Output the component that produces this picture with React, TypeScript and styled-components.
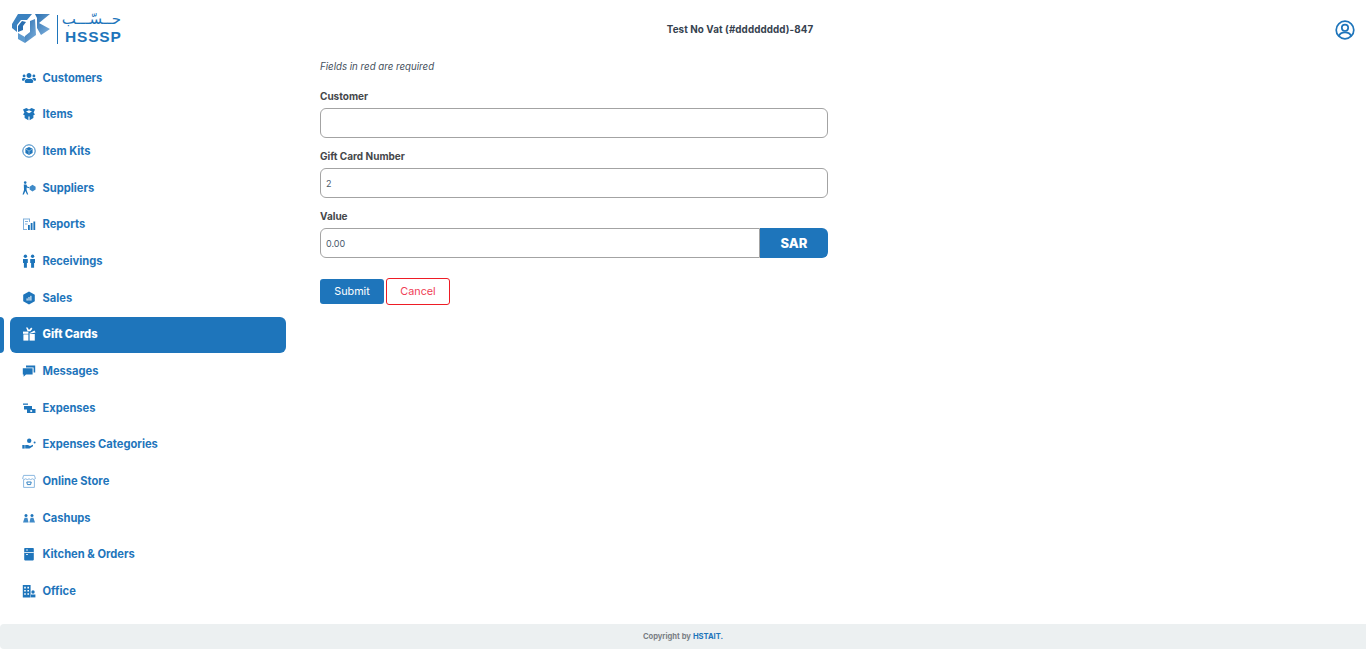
import styled, { createGlobalStyle } from "styled-components";
import type { ReactNode } from "react";
import { FaUsers } from "react-icons/fa";

const blue = "#1e75bb";

const GlobalStyle = createGlobalStyle`
  html, body {
    margin: 0;
    padding: 0;
    background: #fff;
    font-family: Inter, "Liberation Sans", sans-serif;
  }
  * { box-sizing: border-box; }
`;

const Page = styled.div`
  width: 1366px;
  height: 650px;
  display: grid;
  grid-template-columns: 296px 1fr;
  grid-template-rows: 624px 25px;
  overflow: hidden;
`;

const Sidebar = styled.aside`
  display: flex;
  flex-direction: column;
`;

const LogoRow = styled.div`
  height: 60.3px;
  padding: 13px 0 0 12px;
  display: flex;
  align-items: flex-start;
`;

const LogoDivider = styled.div`
  width: 1px;
  height: 29px;
  margin: 2px 7px 0 7px;
  background: ${blue};
`;

const LogoWords = styled.div`
  display: flex;
  flex-direction: column;
  width: 56px;
  margin-top: -2px;
`;

const LogoArabic = styled.div`
  font-family: "DejaVu Sans", sans-serif;
  font-size: 15px;
  line-height: 17px;
  height: 17px;
  color: ${blue};
  text-align: center;
  direction: rtl;
  white-space: nowrap;
`;

const LogoLatin = styled.div`
  font-family: "Liberation Sans", sans-serif;
  font-weight: 700;
  font-size: 15.5px;
  line-height: 18px;
  letter-spacing: 0.8px;
  color: ${blue};
`;

const Nav = styled.nav`
  display: flex;
  flex-direction: column;
`;

const NavRow = styled.div<{ $active?: boolean }>`
  position: relative;
  height: 36px;
  margin: 0 10px 0.67px 10px;
  padding: 0 0 1px 12px;
  display: flex;
  align-items: center;
  gap: 6.5px;
  border-radius: 6px;
  background: ${(p) => (p.$active ? blue : "transparent")};
  color: ${(p) => (p.$active ? "#fff" : blue)};
  font-size: 11.15px;
  font-weight: ${(p) => (p.$active ? 800 : 700)};

  ${(p) =>
    p.$active &&
    `&::before {
      content: "";
      position: absolute;
      left: -10px;
      top: 0;
      width: 4px;
      height: 36px;
      background: ${blue};
      border-radius: 0 4px 4px 0;
    }`}
`;

const NavIcon = styled.span`
  width: 14px;
  height: 14px;
  display: flex;
  align-items: center;
  justify-content: center;
  flex: none;
  svg {
    width: 14px;
    height: 14px;
    display: block;
  }
`;

const Main = styled.main`
  display: flex;
  flex-direction: column;
  min-width: 0;
`;

const TopBar = styled.header`
  position: relative;
  height: 59px;
  display: flex;
  align-items: center;
  justify-content: center;
  padding-right: 182px;
`;

const AccountTitle = styled.div`
  font-size: 9.8px;
  font-weight: 700;
  color: #36424f;
  letter-spacing: 0.1px;
`;

const ProfileIcon = styled.svg`
  position: absolute;
  right: 11px;
  top: 20px;
  width: 20px;
  height: 20px;
`;

const FormArea = styled.form`
  width: 508px;
  margin-left: 24px;
  display: flex;
  flex-direction: column;
`;

const RequiredNote = styled.div`
  font-size: 9.7px;
  font-style: italic;
  color: #44505c;
  line-height: 14px;
  margin: 1px 0 15px;
`;

const FieldLabel = styled.label`
  display: block;
  font-size: 10px;
  font-weight: 700;
  color: #45474a;
  line-height: 14px;
  margin-bottom: 5px;
`;

const Field = styled.div`
  margin-bottom: 11px;
`;

const TextInput = styled.input<{ $joined?: boolean }>`
  width: 100%;
  height: 30px;
  padding: 0 5px;
  flex: 1;
  border: 1px solid #a3a3a3;
  border-radius: ${(p) => (p.$joined ? "6px 0 0 6px" : "6px")};
  background: #fff;
  color: #4a5a6c;
  font-family: inherit;
  font-size: 9px;
  outline: none;
`;

const InputGroup = styled.div`
  display: flex;
`;

const CurrencyAddon = styled.div`
  width: 68px;
  height: 30px;
  display: flex;
  align-items: center;
  justify-content: center;
  background: ${blue};
  color: #fff;
  border-radius: 0 6px 6px 0;
  font-size: 13px;
  font-weight: 800;
  padding-bottom: 1px;
`;

const ButtonRow = styled.div`
  display: flex;
  align-items: center;
  gap: 2px;
  margin-top: 9px;
`;

const SubmitButton = styled.button`
  width: 64px;
  height: 25px;
  border: none;
  border-radius: 3px;
  background: ${blue};
  color: #fff;
  font-family: inherit;
  font-size: 10.8px;
  font-weight: 400;
  padding-bottom: 2px;
`;

const CancelButton = styled.button`
  width: 64px;
  height: 27px;
  border: 1px solid #ee1c25;
  border-radius: 3px;
  background: #fff;
  color: #ef4056;
  font-family: inherit;
  font-size: 10.8px;
  padding-bottom: 2px;
`;

const Footer = styled.footer`
  grid-column: 1 / -1;
  display: flex;
  align-items: center;
  justify-content: center;
  background: #ecf0f1;
  border-radius: 4px 0 0 4px;
  font-size: 7.6px;
  font-weight: 700;
  color: #7a7f85;
`;

const FooterBrand = styled.span`
  color: ${blue};
  margin-left: 2px;
`;

function LogoMark() {
  return (
    <svg width="38" height="30" viewBox="0 0 38 30">
      <defs>
        <linearGradient id="logoFill" x1="0" y1="0" x2="1" y2="1">
          <stop offset="0" stopColor="#2a6fb0" />
          <stop offset="1" stopColor="#7fb0dc" />
        </linearGradient>
      </defs>
      <path d="M0 11 L6 1 L20 1 L15 7 L9 7 L5 12 L5 19 L0 15 Z" fill="#3b82c0" />
      <path d="M6 19 L6 13 L10 8 L14 9 L11 13 L11 17 Z" fill="#2a6fb0" />
      <path d="M13 23 L18 19 L18 8 L23 6 L24 22 L13 30 Z" fill="url(#logoFill)" />
      <path d="M6 20 L13 24 L13 30 L6 26 Z" fill="#5d9bd0" />
      <path d="M23 1 L38 1 L27 10 L38 16 L29 22 L25 15 L25 5 Z" fill="url(#logoFill)" />
    </svg>
  );
}

function ItemsIcon() {
  return (
    <svg viewBox="0 0 14 14" fill={blue}>
      <path d="M1 2.6 L4.4 .9 L7 2.4 L9.6 .9 L13 2.6 L11.6 5.4 L13 7.4 L11.4 8.2 L11.4 11 L7.6 13.3 L7.6 9.4 L6.4 9.4 L6.4 13.3 L2.6 11 L2.6 8.2 L1 7.4 L2.4 5.4 Z M4 4.6 L7 6.2 L10 4.6 L7 3.2 Z" fillRule="evenodd" />
    </svg>
  );
}

function ItemKitsIcon() {
  return (
    <svg viewBox="0 0 14 14">
      <circle cx="7" cy="7" r="6.2" fill="none" stroke={blue} strokeWidth="0.9" />
      <path d="M7 3 L10.6 4.8 L10.6 9 L7 11 L3.4 9 L3.4 4.8 Z" fill={blue} />
      <path d="M7 7 V10.4 M4 5.2 L7 7 L10 5.2" stroke="#dcebf7" strokeWidth="0.5" fill="none" />
    </svg>
  );
}

function SuppliersIcon() {
  return (
    <svg viewBox="0 0 14 14" fill={blue}>
      <circle cx="3.2" cy="1.6" r="1.3" />
      <path d="M1.8 3.4 L4.4 3.4 L5.2 5.4 L7.4 6.2 L7.2 7.2 L4.6 6.6 L4.6 9 L6.2 13.4 L5 13.4 L3.4 10 L1.8 13.4 L.5 13.4 L2 9 Z" />
      <path d="M10.5 3.8 L13.6 5.8 L13.6 8.6 L10.5 10.6 L7.6 8.6 L7.6 5.8 Z" fill="#3f8ac8" />
    </svg>
  );
}

function ReportsIcon() {
  return (
    <svg viewBox="0 0 14 14">
      <path d="M1 1.5 H8 V5 H7 V2.5 H2 V12 H5 V13 H1 Z" fill="#7fb0dc" />
      <rect x="3" y="4" width="3" height="1" fill="#7fb0dc" />
      <rect x="3" y="6.5" width="2.5" height="1" fill="#7fb0dc" />
      <rect x="6" y="8" width="1.8" height="5" fill={blue} />
      <rect x="8.7" y="6" width="1.8" height="7" fill={blue} />
      <rect x="11.4" y="4.5" width="1.8" height="8.5" fill={blue} />
    </svg>
  );
}

function ReceivingsIcon() {
  return (
    <svg viewBox="0 0 14 14" fill={blue}>
      <circle cx="3.4" cy="2.2" r="1.7" />
      <circle cx="10.6" cy="2.2" r="1.7" />
      <path d="M1 5 H5.8 V9 H4.9 V13.7 H1.9 V9 H1 Z" />
      <path d="M8.2 5 H13 V9 H12.1 V13.7 H9.1 V9 H8.2 Z" />
    </svg>
  );
}

function SalesIcon() {
  return (
    <svg viewBox="0 0 14 14">
      <path d="M7 .6 L12.8 3.7 L12.8 10.3 L7 13.4 L1.2 10.3 L1.2 3.7 Z" fill={blue} />
      <rect x="4.6" y="7.4" width="1" height="2.2" fill="#fff" />
      <rect x="6.5" y="6" width="1" height="3.6" fill="#fff" />
      <rect x="8.4" y="4.8" width="1" height="4.8" fill="#fff" />
    </svg>
  );
}

function GiftOpenIcon() {
  return (
    <svg viewBox="0 0 14 14" fill="#fff">
      <path d="M1.4 7.4 H6.4 V13.6 H1.4 Z" />
      <path d="M7.6 7 H12.8 V13.6 H7.6 Z" />
      <path d="M1 4.6 L6.4 4.6 L6.4 6.8 L1 6.8 Z" />
      <path d="M7.4 6.2 L12.4 3.4 L13.6 5.4 L7.6 6.8 Z" />
      <path d="M4 .4 L5.6 .4 L7 3 L9.2 .6 L10.4 1.8 L8.4 4.2 L5.6 4.2 Z" />
    </svg>
  );
}

function MessagesIcon() {
  return (
    <svg viewBox="0 0 14 14" fill={blue}>
      <path d="M4 1.6 H13.2 V8.6 L11.6 8.6 L11.6 3.4 L4 3.4 Z" />
      <path d="M.8 4.2 H10.6 V10.6 H4 L1.6 12.8 L1.6 10.6 H.8 Z" />
    </svg>
  );
}

function ExpensesIcon() {
  return (
    <svg viewBox="0 0 14 14" fill={blue}>
      <path d="M1 2.5 L6 2.5 L6 3.8 L1 3.8 Z" />
      <path d="M2 5 H10 V8.5 H2 Z" />
      <path d="M5 8 H13.5 V12 H5 Z" />
      <circle cx="9.2" cy="10" r="1.1" fill="#fff" />
    </svg>
  );
}

function ExpenseCategoriesIcon() {
  return (
    <svg viewBox="0 0 14 14" fill={blue}>
      <rect x="0.3" y="8" width="2.4" height="3.6" />
      <path d="M3.2 8 H6 L8 9 L11 7.8 V9.2 L7.5 11.4 H3.2 Z" />
      <circle cx="7.2" cy="3.8" r="2.2" />
      <circle cx="12.6" cy="5.4" r="1" />
    </svg>
  );
}

function OnlineStoreIcon() {
  return (
    <svg viewBox="0 0 14 14" fill="none" stroke="#7fb0dc" strokeWidth="0.9">
      <path d="M1.6 1.4 H12.4 L13.4 4.6 Q12 6.4 10.4 4.8 Q8.6 6.4 7 4.8 Q5.4 6.4 3.6 4.8 Q2 6.4 .6 4.6 Z" />
      <path d="M1.6 6 V13.4 H12.4 V6" />
      <path d="M4.8 8 H9.2 L8.6 10.6 H5.4 Z" stroke={blue} />
    </svg>
  );
}

function CashupsIcon() {
  return (
    <svg viewBox="0 0 14 14" fill={blue}>
      <circle cx="4" cy="4.6" r="1.5" />
      <circle cx="10" cy="4.6" r="1.5" />
      <path d="M1 11.4 L2.6 6.8 H5.4 L6.6 11.4 Z" fill="#3f8ac8" />
      <path d="M7.4 11.4 L8.6 6.8 H11.4 L13 11.4 Z" fill="#3f8ac8" />
    </svg>
  );
}

function KitchenIcon() {
  return (
    <svg viewBox="0 0 14 14">
      <rect x="2.2" y="1" width="9.6" height="12.4" rx="0.8" fill={blue} />
      <rect x="2.2" y="5" width="9.6" height="0.8" fill="#fff" />
      <rect x="4" y="2.6" width="2" height="0.8" fill="#fff" />
      <rect x="4" y="7" width="2" height="0.8" fill="#fff" />
    </svg>
  );
}

function OfficeIcon() {
  return (
    <svg viewBox="0 0 14 14" fill={blue}>
      <path d="M.8 1 H8.6 V13.4 H.8 Z M2.2 2.8 V4.4 H3.8 V2.8 Z M5.4 2.8 V4.4 H7 V2.8 Z M2.2 6 V7.6 H3.8 V6 Z M5.4 6 V7.6 H7 V6 Z M2.2 9.2 V10.8 H3.8 V9.2 Z M5.4 9.2 V10.8 H7 V9.2 Z" fillRule="evenodd" />
      <circle cx="11" cy="8" r="1.7" />
      <path d="M9 10.5 H13.4 V13.4 H9 Z" />
    </svg>
  );
}

const navItems: { label: string; icon: ReactNode; active?: boolean }[] = [
  { label: "Customers", icon: <FaUsers /> },
  { label: "Items", icon: <ItemsIcon /> },
  { label: "Item Kits", icon: <ItemKitsIcon /> },
  { label: "Suppliers", icon: <SuppliersIcon /> },
  { label: "Reports", icon: <ReportsIcon /> },
  { label: "Receivings", icon: <ReceivingsIcon /> },
  { label: "Sales", icon: <SalesIcon /> },
  { label: "Gift Cards", icon: <GiftOpenIcon />, active: true },
  { label: "Messages", icon: <MessagesIcon /> },
  { label: "Expenses", icon: <ExpensesIcon /> },
  { label: "Expenses Categories", icon: <ExpenseCategoriesIcon /> },
  { label: "Online Store", icon: <OnlineStoreIcon /> },
  { label: "Cashups", icon: <CashupsIcon /> },
  { label: "Kitchen & Orders", icon: <KitchenIcon /> },
  { label: "Office", icon: <OfficeIcon /> },
];

export default function App() {
  return (
    <>
      <GlobalStyle />
      <Page>
        <Sidebar>
          <LogoRow>
            <LogoMark />
            <LogoDivider />
            <LogoWords>
              <LogoArabic>حــسّـــب</LogoArabic>
              <LogoLatin>HSSSP</LogoLatin>
            </LogoWords>
          </LogoRow>
          <Nav>
            {navItems.map((item) => (
              <NavRow key={item.label} $active={item.active}>
                <NavIcon>{item.icon}</NavIcon>
                {item.label}
              </NavRow>
            ))}
          </Nav>
        </Sidebar>
        <Main>
          <TopBar>
            <AccountTitle>Test No Vat (#dddddddd)-847</AccountTitle>
            <ProfileIcon viewBox="0 0 20 20" fill="none" stroke={blue} strokeWidth="1.7">
              <circle cx="10" cy="10" r="8.8" />
              <circle cx="10" cy="7.8" r="3.2" />
              <path d="M4 16 C5 13 7.5 12.4 10 12.4 C12.5 12.4 15 13 16 16" />
            </ProfileIcon>
          </TopBar>
          <FormArea onSubmit={(e) => e.preventDefault()}>
            <RequiredNote>Fields in red are required</RequiredNote>
            <Field>
              <FieldLabel>Customer</FieldLabel>
              <TextInput />
            </Field>
            <Field>
              <FieldLabel>Gift Card Number</FieldLabel>
              <TextInput defaultValue="2" />
            </Field>
            <Field>
              <FieldLabel>Value</FieldLabel>
              <InputGroup>
                <TextInput $joined defaultValue="0.00" />
                <CurrencyAddon>SAR</CurrencyAddon>
              </InputGroup>
            </Field>
            <ButtonRow>
              <SubmitButton type="submit">Submit</SubmitButton>
              <CancelButton type="button">Cancel</CancelButton>
            </ButtonRow>
          </FormArea>
        </Main>
        <Footer>
          Copyright by <FooterBrand>HSTAIT.</FooterBrand>
        </Footer>
      </Page>
    </>
  );
}
